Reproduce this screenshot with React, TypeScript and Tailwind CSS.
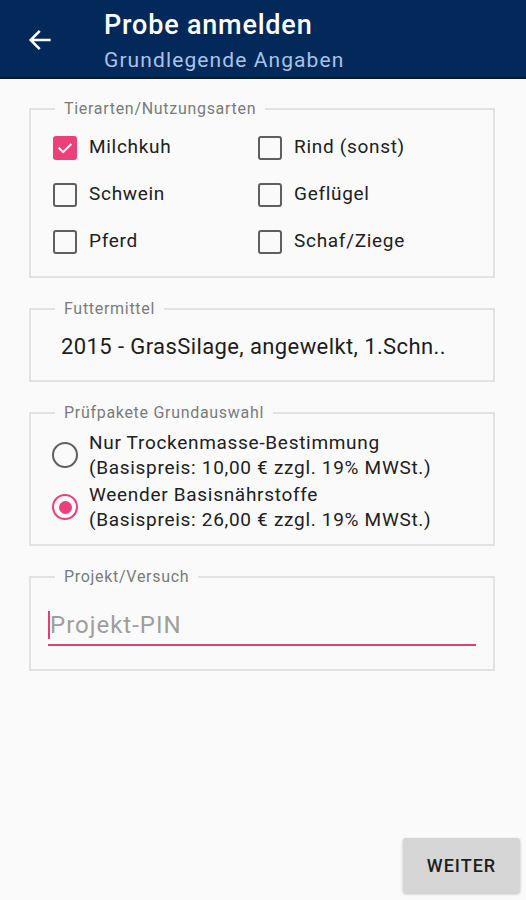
import React from 'react';

const PINK = 'bg-[#ec407a]';

function Checkbox({ label, checked }: { label: string; checked?: boolean }) {
    return (
        <div className="flex items-center h-[47px]">
            {checked ? (
                <div className={`w-[24px] h-[24px] rounded-[3px] ${PINK} flex items-center justify-center`}>
                    <svg width="18" height="18" viewBox="0 0 24 24" fill="none">
                        <path d="M4.5 12.5l5 5 10-10" stroke="white" strokeWidth="2.6" strokeLinecap="square" />
                    </svg>
                </div>
            ) : (
                <div className="w-[24px] h-[24px] rounded-[3px] border-2 border-[#5f5f5f]" />
            )}
            <span className="ml-[12px] text-[19px] tracking-[0.7px] text-[#202020]">{label}</span>
        </div>
    );
}

function Radio({ lines, checked }: { lines: string[]; checked?: boolean }) {
    return (
        <div className="flex items-center">
            <div
                className={`w-[26px] h-[26px] rounded-full border-2 flex items-center justify-center ${
                    checked ? 'border-[#ec407a]' : 'border-[#5f5f5f]'
                }`}
            >
                {checked && <div className={`w-[13px] h-[13px] rounded-full ${PINK}`} />}
            </div>
            <div className="ml-[11px] text-[19px] leading-[25px] tracking-[0.7px] text-[#202020]">
                {lines.map((l) => (
                    <div key={l}>{l}</div>
                ))}
            </div>
        </div>
    );
}

function Group({ legend, children }: { legend: string; children: React.ReactNode }) {
    return (
        <fieldset className="border-2 border-[#e2e2e2]">
            <legend className="ml-[24px] px-[9px] text-[16px] leading-[20px] tracking-[0.7px] text-[#7a7a7a]">{legend}</legend>
            {children}
        </fieldset>
    );
}

export default function App() {
    return (
        <div className="min-h-[900px] flex flex-col bg-[#fafafa] font-['Roboto',sans-serif]">
            {/* Toolbar */}
            <header className="h-[79px] bg-[#03295a] border-b-2 border-[#011a3c] flex items-start">
                <div className="w-[104px] pl-[26px] pt-[26px]">
                    <svg width="28" height="28" viewBox="0 0 24 24" fill="none">
                        <path d="M20 12H4.5M11 5l-7 7 7 7" stroke="white" strokeWidth="2.2" strokeLinecap="square" />
                    </svg>
                </div>
                <div className="flex flex-col pt-[9px] gap-[6px]">
                    <span className="text-[27px] leading-[32px] font-medium tracking-[0.8px] text-white">Probe anmelden</span>
                    <span className="text-[21px] leading-[26px] tracking-[1.1px] text-[#a9c2e6]">Grundlegende Angaben</span>
                </div>
            </header>

            <main className="px-[29px] pr-[31px] pt-[20px] flex flex-col gap-[21px]">
                <Group legend="Tierarten/Nutzungsarten">
                    <div className="grid grid-cols-[205px_1fr] pl-[22px] pt-[5px] pb-[11px]">
                        <Checkbox label="Milchkuh" checked />
                        <Checkbox label="Rind (sonst)" />
                        <Checkbox label="Schwein" />
                        <Checkbox label="Geflügel" />
                        <Checkbox label="Pferd" />
                        <Checkbox label="Schaf/Ziege" />
                    </div>
                </Group>

                <Group legend="Futtermittel">
                    <div className="pl-[30px] pt-[14px] pb-[19px] text-[22px] leading-[28px] tracking-[0.4px] text-[#1c1c1c]">
                        2015 - GrasSilage, angewelkt, 1.Schn..
                    </div>
                </Group>

                <Group legend="Prüfpakete Grundauswahl">
                    <div className="flex flex-col gap-[2px] pl-[21px] pt-[7px] pb-[12px]">
                        <Radio lines={['Nur Trockenmasse-Bestimmung', '(Basispreis: 10,00 € zzgl. 19% MWSt.)']} />
                        <Radio checked lines={['Weender Basisnährstoffe', '(Basispreis: 26,00 € zzgl. 19% MWSt.)']} />
                    </div>
                </Group>

                <Group legend="Projekt/Versuch">
                    <div className="px-[17px] pt-[23px] pb-[23px]">
                        <div className="border-b-2 border-[#e63d78] pb-[4px] flex items-center">
                            <div className="w-[2px] h-[28px] bg-[#e63d78]" />
                            <span className="text-[24px] leading-[30px] tracking-[1px] text-[#9e9e9e]">Projekt-PIN</span>
                        </div>
                    </div>
                </Group>
            </main>

            <div className="mt-auto flex justify-end pr-[6px] pb-[7px]">
                <button className="w-[117px] h-[55px] bg-[#d6d6d6] rounded-[3px] shadow-[0_1px_3px_rgba(0,0,0,0.25)] text-[18px] font-medium tracking-[1px] text-[#1e1e1e]">
                    WEITER
                </button>
            </div>
        </div>
    );
}
